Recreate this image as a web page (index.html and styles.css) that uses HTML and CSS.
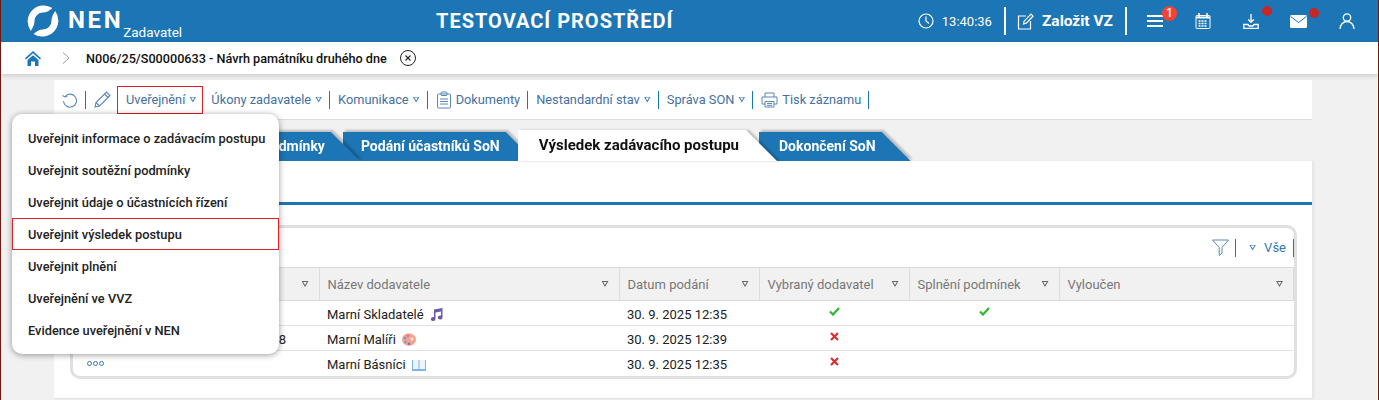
FILE: index.html
```html
<!DOCTYPE html>
<html lang="cs">
<head>
    <meta charset="UTF-8">
    <title>NEN Zadavatel</title>
    <link rel="stylesheet" href="styles.css">
</head>
<body>
    <header class="topbar">
        <div class="brand">
            <svg class="logo" viewBox="0 0 34 34" width="32" height="32">
                <path fill="#fff" d="M4 27.500A17 17 0 0 1 27 3.200C24 6 21 8 17 8A9 9 0 0 0 8 17C8 20 6.500 24 4 27.500z"/>
                <path fill="#fff" d="M30 6.500A17 17 0 0 1 7 30.800C10 28 13 26 17 26A9 9 0 0 0 26 17C26 14 27.500 10 30 6.500z"/>
            </svg>
            <span class="brand-name">NEN</span>
            <span class="brand-role">Zadavatel</span>
        </div>
        <div class="env-title">TESTOVACÍ PROSTŘEDÍ</div>
        <div class="top-actions">
            <svg class="clock-icon" viewBox="0 0 16 16" width="16" height="16" fill="none" stroke="#fff" stroke-width="1.200"><circle cx="8" cy="8" r="7"/><path d="M8 3.500V8l3 2.500"/></svg>
            <span class="clock-time">13:40:36</span>
            <i class="top-sep"></i>
            <svg class="new-icon" viewBox="0 0 17 17" width="17" height="17" fill="none" stroke="#fff" stroke-width="1.200"><path d="M9 3H1.500v13h12V8"/><path d="M6.500 11l.6-2.800L14 1.200l2 2-6.800 7z"/></svg>
            <span class="new-label">Založit VZ</span>
            <i class="top-sep sep-right"></i>
            <span class="top-icon menu-icon">
                <svg viewBox="0 0 16 14" width="16" height="14" fill="#fff"><rect y="1" width="16" height="2"/><rect y="6" width="16" height="2"/><rect y="11" width="16" height="2"/></svg>
                <b class="count-badge">1</b>
            </span>
            <span class="top-icon calendar-icon">
                <svg viewBox="0 0 16 16" width="16" height="16" fill="none" stroke="#fff"><rect x="1" y="2.500" width="14" height="13" rx="1"/><path d="M4 0v4M12 0v4" stroke-width="1.500"/><path d="M1 4.500h14" stroke-width="2"/><path d="M3.500 8h9M3.500 10.500h9M3.500 13h9" stroke-width="1.500" stroke-dasharray="2 1"/></svg>
            </span>
            <span class="top-icon inbox-icon">
                <svg viewBox="0 0 16 16" width="16" height="16" fill="none" stroke="#fff" stroke-width="1.300"><path d="M8 1v8M5.200 6.500L8 9.300l2.800-2.800"/><path d="M.8 11.500H5l1.200 1.500h3.600l1.200-1.500h4.200v4H.8z"/></svg>
                <b class="dot"></b>
            </span>
            <span class="top-icon mail-icon">
                <svg viewBox="0 0 17 13" width="17" height="13"><rect width="17" height="13" rx="1.500" fill="#fff"/><path d="M.5 1.500l8 6 8-6" fill="none" stroke="#1c75b4"/></svg>
                <b class="dot"></b>
            </span>
            <span class="top-icon user-icon">
                <svg viewBox="0 0 16 16" width="16" height="16" fill="none" stroke="#fff" stroke-width="1.300"><circle cx="8" cy="4.500" r="3.700"/><path d="M1 16c0-4 3-7.500 7-7.500s7 3.500 7 7.500"/></svg>
            </span>
        </div>
    </header>

    <nav class="crumbs">
        <svg class="home-icon" viewBox="0 0 16 15" width="16" height="15"><path fill="#1c75b4" d="M8 0L0 7.300l1 1.100L8 2.200l7 6.200 1-1.100z"/><path fill="#1c75b4" d="M2.500 9L8 4.200 13.500 9v6H10v-4.500H6V15H2.500z"/></svg>
        <svg class="crumb-arrow" viewBox="0 0 8 12" width="8" height="12" fill="none" stroke="#999"><path d="M1 .5L7 6l-6 5.500"/></svg>
        <span class="crumb-text">N006/25/S00000633 - Návrh památníku druhého dne</span>
        <svg class="crumb-close" viewBox="0 0 16 16" width="16" height="16" fill="none" stroke="#222"><circle cx="8" cy="8" r="7.500"/><path d="M5.500 5.500l5 5M10.500 5.500l-5 5" stroke-width="1.100"/></svg>
    </nav>

    <main class="main">
        <div class="toolbar">
            <svg class="tool-icon refresh" viewBox="0 0 16 16" width="16" height="16" fill="none" stroke="#5a86b8" stroke-width="1.100"><path d="M3 4.500A6.500 6.500 0 1 1 1.500 9"/><path d="M.5 3.500L3 5l2.500-1"/></svg>
            <i class="tool-sep"></i>
            <svg class="tool-icon pencil" viewBox="0 0 17 17" width="17" height="17" fill="none" stroke="#5a86b8" stroke-width="1.100"><path d="M1 16l1-4.500L12.500 1l3.500 3.500L5.500 15z"/><path d="M2 11.500L5.500 15M10.500 3l3.500 3.500"/></svg>
            <span class="tool-item tool-open">Uveřejnění <i class="caret"></i></span>
            <span class="tool-item">Úkony zadavatele <i class="caret"></i></span>
            <i class="tool-sep"></i>
            <span class="tool-item">Komunikace <i class="caret"></i></span>
            <i class="tool-sep"></i>
            <span class="tool-item">
                <svg viewBox="0 0 16 18" width="16" height="18" fill="none" stroke="#5a86b8"><rect x="1.500" y="3" width="13" height="14" rx="1"/><rect x="5" y="1" width="6" height="3.500" rx="1"/><path d="M4 8h8M4 10.500h8M4 13h8"/></svg>
                Dokumenty
            </span>
            <i class="tool-sep"></i>
            <span class="tool-item">Nestandardní stav <i class="caret"></i></span>
            <i class="tool-sep"></i>
            <span class="tool-item">Správa SON <i class="caret"></i></span>
            <i class="tool-sep"></i>
            <span class="tool-item">
                <svg viewBox="0 0 17 16" width="17" height="16" fill="none" stroke="#5a86b8"><path d="M4 5V1h9v4M4 12H1V5h15v7h-3"/><path d="M4 9.500h9V15H4zM6 11.500h5M6 13.300h5"/></svg>
                Tisk záznamu
            </span>
            <i class="tool-sep"></i>
        </div>

        <div class="tabs">
            <div class="tab tab-first"><span>Soutěžní podmínky</span></div>
            <div class="tab tab-second"><span>Podání účastníků SoN</span></div>
            <div class="tab tab-active"><span>Výsledek zadávacího postupu</span></div>
            <div class="tab tab-last"><span>Dokončení SoN</span></div>
        </div>

        <section class="panel">
            <div class="panel-rule"></div>
            <div class="grid-box">
                <div class="grid-tools">
                    <svg viewBox="0 0 17 17" width="17" height="17" fill="none" stroke="#5a86b8"><path d="M.5 1h16L10 8.500V14l-2.800 2.500V8.500z"/></svg>
                    <i class="tool-sep sep-filter"></i>
                    <i class="caret"></i>
                    <span class="all-link">Vše</span>
                    <i class="tool-sep sep-all"></i>
                </div>
                <table class="grid">
                    <colgroup>
                        <col class="col-a"><col class="col-b"><col class="col-c"><col class="col-d"><col class="col-d"><col class="col-e">
                    </colgroup>
                    <thead>
                        <tr>
                            <th><span class="th-in"><span></span><i class="caret gray"></i></span></th>
                            <th><span class="th-in">Název dodavatele<i class="caret gray"></i></span></th>
                            <th><span class="th-in">Datum podání<i class="caret gray"></i></span></th>
                            <th><span class="th-in">Vybraný dodavatel<i class="caret gray"></i></span></th>
                            <th><span class="th-in">Splnění podmínek<i class="caret gray"></i></span></th>
                            <th><span class="th-in">Vyloučen<i class="caret gray"></i></span></th>
                        </tr>
                    </thead>
                    <tbody>
                        <tr>
                            <td class="first-cell"><span class="dots"><i></i><i></i><i></i></span></td>
                            <td>Marní Skladatelé
                                <svg class="emoji" viewBox="0 0 13 13" width="13" height="13"><path fill="#6b5aa8" d="M4 1.500L12.500 0v9.500a2.300 2 0 1 1-1.500-1.900V3.500L5.500 4.500V11a2.300 2 0 1 1-1.500-1.900z"/></svg>
                            </td>
                            <td>30. 9. 2025 12:35</td>
                            <td class="mark">
                                <svg viewBox="0 0 11 9" width="11" height="9" fill="none" stroke="#2eb82e" stroke-width="2.200"><path d="M1 4.500L4 7.500 10 1"/></svg>
                            </td>
                            <td class="mark">
                                <svg viewBox="0 0 11 9" width="11" height="9" fill="none" stroke="#2eb82e" stroke-width="2.200"><path d="M1 4.500L4 7.500 10 1"/></svg>
                            </td>
                            <td></td>
                        </tr>
                        <tr>
                            <td class="first-cell"><span class="dots"><i></i><i></i><i></i></span><span class="first-tail">8</span></td>
                            <td>Marní Malíři
                                <svg class="emoji" viewBox="0 0 14 13" width="14" height="13"><ellipse cx="7" cy="6.500" rx="7" ry="6.300" fill="#f2a48f"/><circle cx="3" cy="5" r="1.200" fill="#5a9bd8"/><circle cx="6" cy="2.800" r="1.200" fill="#e86aa0"/><circle cx="3.500" cy="9" r="1.200" fill="#52b8a0"/><circle cx="7" cy="10.800" r="1.200" fill="#7a6ad0"/><circle cx="10" cy="6" r="1.500" fill="#fbe9e4"/></svg>
                            </td>
                            <td>30. 9. 2025 12:39</td>
                            <td class="mark">
                                <svg viewBox="0 0 9 9" width="9" height="9" fill="none" stroke="#d93030" stroke-width="2.200"><path d="M1 1l7 7M8 1L1 8"/></svg>
                            </td>
                            <td></td>
                            <td></td>
                        </tr>
                        <tr>
                            <td class="first-cell"><span class="dots"><i></i><i></i><i></i></span></td>
                            <td>Marní Básníci
                                <svg class="emoji" viewBox="0 0 14 12" width="14" height="12"><rect y="1" width="14" height="11" fill="#7fb4e8"/><path fill="#eef4fb" d="M1 1h5.500v9H1zM7.500 1H13v9H7.500z"/></svg>
                            </td>
                            <td>30. 9. 2025 12:35</td>
                            <td class="mark">
                                <svg viewBox="0 0 9 9" width="9" height="9" fill="none" stroke="#d93030" stroke-width="2.200"><path d="M1 1l7 7M8 1L1 8"/></svg>
                            </td>
                            <td></td>
                            <td></td>
                        </tr>
                    </tbody>
                </table>
            </div>
        </section>
    </main>

    <ul class="dropdown">
        <li>Uveřejnit informace o zadávacím postupu</li>
        <li>Uveřejnit soutěžní podmínky</li>
        <li>Uveřejnit údaje o účastnících řízení</li>
        <li class="picked">Uveřejnit výsledek postupu</li>
        <li>Uveřejnit plnění</li>
        <li>Uveřejnění ve VVZ</li>
        <li>Evidence uveřejnění v NEN</li>
    </ul>
</body>
</html>
```

FILE: styles.css
```css
html, body {
    margin: 0;
    padding: 0;
    height: 400px;
    overflow: hidden;
}

body {
    font-family: Roboto, "Liberation Sans", sans-serif;
    font-size: 13px;
    color: #222;
    background: #f1f1f1;
    border-left: 1px solid #6e1a10;
    border-right: 1px solid #6e1a10;
    position: relative;
}

/* horni lista */
.topbar {
    display: flex;
    align-items: center;
    height: 42px;
    background: #1c75b4;
    color: #fff;
}

.brand {
    display: flex;
    align-items: flex-start;
    width: 435px;
    height: 42px;
    padding-left: 26px;
    box-sizing: border-box;
}

.logo {
    margin-top: 5px;
}

.brand-name {
    margin: 6px 0 0 9px;
    font-size: 24px;
    font-weight: 700;
    letter-spacing: 2.600px;
    line-height: 28px;
}

.brand-role {
    margin: 24px 0 0 0;
    font-size: 13.500px;
    line-height: 17px;
}

.env-title {
    font-size: 20px;
    font-weight: 700;
    letter-spacing: 1px;
}

.top-actions {
    display: flex;
    align-items: center;
    margin-left: auto;
    height: 42px;
}

.clock-time {
    margin-left: 8px;
    font-size: 13px;
}

.top-sep {
    width: 2px;
    height: 28px;
    margin: 0 12px 0 12px;
    background: #fff;
}

.new-icon {
    margin: 0 8px 0 -1px;
}

.new-label {
    font-size: 15.500px;
    font-weight: 700;
}

.sep-right {
    margin-right: 20px;
}

.top-icon {
    display: flex;
    position: relative;
    width: 16px;
    margin-right: 32px;
}

.inbox-icon {
    margin-right: 31px;
}

.mail-icon {
    width: 17px;
}

.user-icon {
    margin-right: 23px;
}

.count-badge {
    position: absolute;
    top: -8px;
    left: 15px;
    width: 15px;
    height: 15px;
    border-radius: 50%;
    background: #f44336;
    font-size: 12px;
    font-weight: 500;
    line-height: 15px;
    text-align: center;
}

.dot {
    position: absolute;
    top: -7px;
    left: 19px;
    width: 10px;
    height: 10px;
    border-radius: 50%;
    background: #c62828;
}

/* drobeckova navigace */
.crumbs {
    display: flex;
    align-items: center;
    height: 32px;
    padding-left: 24px;
    background: #fff;
    box-shadow: 0 2px 5px rgba(0, 0, 0, 0.15);
    position: relative;
}

.crumb-arrow {
    margin-left: 21px;
}

.crumb-text {
    margin-left: 16px;
    font-size: 12.650px;
    font-weight: 500;
    color: #111;
}

.crumb-close {
    margin-left: 13px;
}

/* obsah */
.main {
    margin: 6px 66px 0 53px;
}

.toolbar {
    display: flex;
    align-items: center;
    height: 39px;
    padding-left: 8px;
    background: #fff;
    border-bottom: 1px solid #ddd;
    font-size: 12.800px;
    color: #44719f;
}

.tool-sep {
    width: 1px;
    height: 18px;
    margin: 0 8px 0 7px;
    background: #1c75b4;
    flex: none;
}

.tool-icon {
    flex: none;
}

.tool-item {
    display: inline-flex;
    align-items: center;
    gap: 4px;
    white-space: nowrap;
}

.tool-open {
    height: 28px;
    box-sizing: border-box;
    margin: 0 8px 0 6px;
    padding: 0 6px 0 8px;
    border: 1px solid #e0202a;
}

.caret {
    display: inline-block;
    width: 7px;
    height: 6px;
    flex: none;
    background: #3f7fb8;
    clip-path: polygon(evenodd, 0 0, 7px 0, 3.500px 6px, 0 0, 1.700px 1px, 3.500px 4px, 5.300px 1px, 1.700px 1px);
}

.caret.gray {
    background: #666;
}

.tabs {
    display: flex;
    align-items: flex-end;
    height: 31px;
    margin-top: 10px;
}

.tab {
    position: relative;
    box-sizing: border-box;
    height: 29px;
    margin-right: -17px;
    padding: 0 35px 0 18px;
    line-height: 29px;
    color: #fff;
    font-size: 14px;
    font-weight: 700;
    white-space: nowrap;
    filter: drop-shadow(2px -2px 1px rgba(0, 0, 0, 0.22));
}

.tab::before {
    content: "";
    position: absolute;
    inset: 0;
    background: #1c75b4;
    clip-path: polygon(0 0, calc(100% - 29px) 0, 100% 100%, 0 100%);
}

.tab span {
    position: relative;
}

.tab-first {
    z-index: 4;
    margin-left: 132px;
}

.tab-second {
    z-index: 3;
}

.tab-active {
    z-index: 5;
    height: 31px;
    line-height: 31px;
    margin-right: -18px;
    padding: 0 38px 0 21px;
    color: #111;
    font-size: 15px;
    filter: drop-shadow(3px 0 1px rgba(0, 0, 0, 0.22));
}

.tab-active::before {
    background: #fff;
    clip-path: polygon(0 0, calc(100% - 31px) 0, 100% 100%, 0 100%);
}

.tab-last {
    z-index: 1;
    padding-left: 20px;
}

.panel {
    padding-top: 41px;
    box-sizing: border-box;
    height: 238px;
    background: #fff;
    border-bottom: 1px solid #e2e2e2;
    box-shadow: 2px 0 3px rgba(0, 0, 0, 0.06);
    position: relative;
}

.panel-rule {
    height: 3px;
    background: #1c75b4;
}

.grid-box {
    margin: 20px 15px 0 16px;
    border: 3px solid #e0e0e0;
    border-radius: 10px;
    overflow: hidden;
}

.grid-tools {
    display: flex;
    align-items: center;
    justify-content: flex-end;
    height: 39px;
    color: #2f78b7;
}

.sep-filter {
    margin: 0 13px 0 6px;
}

.all-link {
    margin-left: 8px;
}

.sep-all {
    margin: 0 0 0 7px;
}

.grid {
    width: 100%;
    table-layout: fixed;
    border-collapse: collapse;
}

.col-a { width: 246px; }
.col-b { width: 300px; }
.col-c { width: 140px; }
.col-d { width: 150px; }

.grid th {
    box-sizing: border-box;
    height: 33px;
    padding: 0 8px;
    background: #f1f1f1;
    border: 1px solid #dcdcdc;
    border-left: 0;
    font-weight: 400;
    color: #777;
    text-align: left;
}

.th-in {
    display: flex;
    align-items: center;
    justify-content: space-between;
    padding-right: 2px;
}

.grid td {
    box-sizing: border-box;
    height: 25px;
    padding: 2px 8px 0;
    border-bottom: 1px solid #e2e2e2;
    white-space: nowrap;
    vertical-align: middle;
}

.grid tr:last-child td {
    border-bottom: 0;
}

.grid td.first-cell {
    position: relative;
    padding-top: 0;
}

.dots {
    display: flex;
    gap: 1px;
    margin-left: 6px;
}

.dots i {
    width: 3px;
    height: 3px;
    border: 1px solid #2f78b7;
    border-radius: 50%;
}

.first-tail {
    position: absolute;
    right: 33px;
    top: 6px;
}

.emoji {
    margin-left: 3px;
    vertical-align: -2px;
}

.grid td.mark {
    padding: 0 0 3px;
    text-align: center;
}

/* rozbalene menu */
.dropdown {
    position: absolute;
    top: 114px;
    left: 11px;
    width: 267px;
    height: 240px;
    margin: 0;
    padding: 8px 0;
    box-sizing: border-box;
    list-style: none;
    background: #fff;
    border-radius: 10px;
    box-shadow: 0 1px 6px rgba(0, 0, 0, 0.4);
    z-index: 10;
}

.dropdown li {
    box-sizing: border-box;
    height: 32px;
    padding-left: 16px;
    line-height: 33px;
    font-weight: 500;
    font-size: 12.800px;
    color: #222;
}

.dropdown .picked {
    border: 1px solid #e0202a;
    padding-left: 15px;
    line-height: 31px;
}
```
